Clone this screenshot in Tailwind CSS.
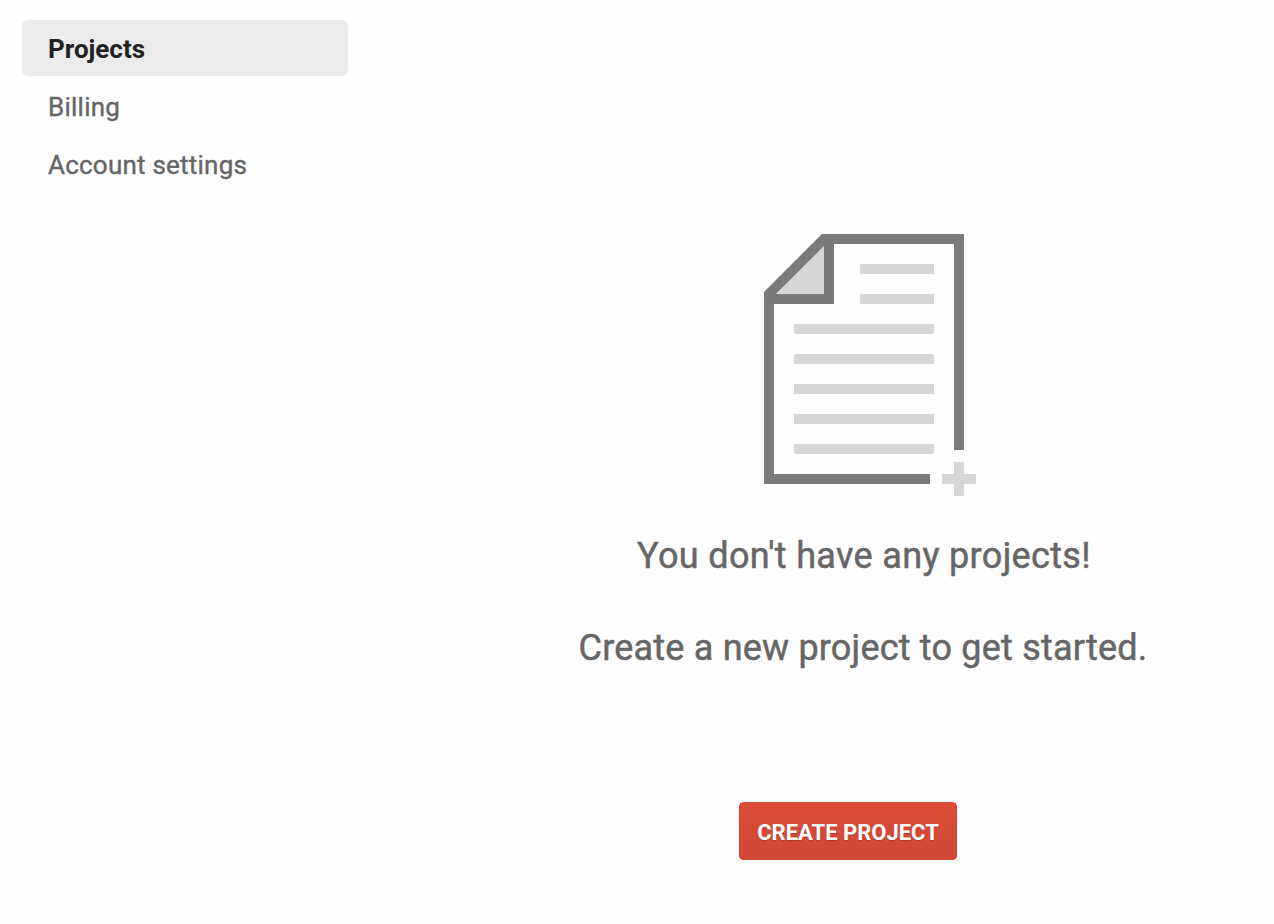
<!DOCTYPE html>
<html lang="en">
<head>
<meta charset="utf-8">
<title>Projects</title>
<script src="https://cdn.jsdelivr.net/npm/@tailwindcss/browser@4"></script>
</head>
<body class="h-screen overflow-hidden bg-[#fefefe] font-[Roboto,sans-serif] text-[#666666]">
<div class="flex h-full">
  <nav class="ml-[22px] mt-5 flex w-[326px] shrink-0 flex-col gap-0.5 text-[26px] leading-[58px]">
    <a class="h-14 rounded-[6px] bg-[#ebebeb] pl-[26px] font-bold text-[#212121]">Projects</a>
    <a class="h-14 pl-[26px] tracking-[0.25px] [-webkit-text-stroke:0.4px_#666666]">Billing</a>
    <a class="h-14 pl-[26px] tracking-[0.22px] [-webkit-text-stroke:0.4px_#666666]">Account settings</a>
  </nav>
  <main class="ml-[104px] flex w-[822px] shrink-0 flex-col items-center pt-[234px]">
    <svg class="ml-[14px] h-[262px] w-[212px] shrink-0" viewBox="0 0 212 262" fill="none">
      <path d="M11 62L61 11V62Z" fill="#d6d6d6"/>
      <path d="M166 245H5V60L60 5H195V216M65 5V65H5" stroke="#7b7b7b" stroke-width="10"/>
      <path d="M96 35H170M96 65H170M30 95H170M30 125H170M30 155H170M30 185H170M30 215H170M178 245H212M195 228V262" stroke="#d6d6d6" stroke-width="10"/>
    </svg>
    <p class="ml-[2px] mt-[37px] h-[46px] text-[36px] leading-[46px] tracking-[0.34px] [-webkit-text-stroke:0.5px_#666666]">You don't have any projects!</p>
    <p class="mt-[46px] h-[46px] text-[36px] leading-[46px] tracking-[0.2px] [-webkit-text-stroke:0.5px_#666666]">Create a new project to get started.</p>
    <button class="mr-[30px] mt-[131px] h-[58px] w-[218px] rounded-[4px] border border-[#d04a38] bg-linear-to-b from-[#dd4b39] to-[#d14836] pt-0.5 text-[22px] font-bold text-white [text-shadow:0_1px_1px_rgba(0,0,0,0.2)]">CREATE PROJECT</button>
  </main>
</div>
</body>
</html>
